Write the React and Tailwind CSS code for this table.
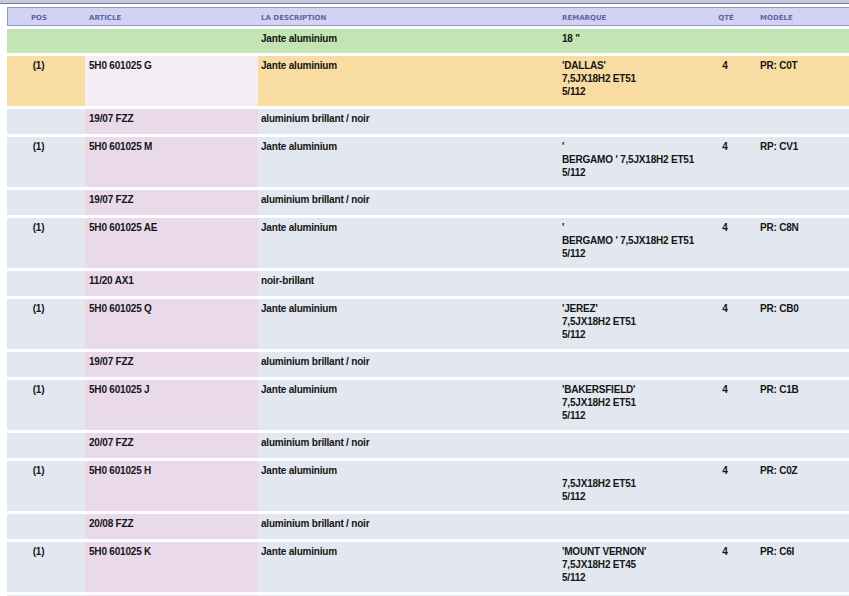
const ROWS = [
  { kind: 'group', desc: 'Jante aluminium', rem: ['18 "'] },
  { kind: 'main', hl: true, pos: '(1)', art: '5H0 601025 G', desc: 'Jante aluminium', rem: ["'DALLAS'", '7,5JX18H2 ET51', '5/112'], qty: '4', mod: 'PR: C0T' },
  { kind: 'sub', art: '19/07 FZZ', desc: 'aluminium brillant / noir' },
  { kind: 'main', pos: '(1)', art: '5H0 601025 M', desc: 'Jante aluminium', rem: ["'", "BERGAMO ' 7,5JX18H2 ET51", '5/112'], qty: '4', mod: 'RP: CV1' },
  { kind: 'sub', art: '19/07 FZZ', desc: 'aluminium brillant / noir' },
  { kind: 'main', pos: '(1)', art: '5H0 601025 AE', desc: 'Jante aluminium', rem: ["'", "BERGAMO ' 7,5JX18H2 ET51", '5/112'], qty: '4', mod: 'PR: C8N' },
  { kind: 'sub', art: '11/20 AX1', desc: 'noir-brillant' },
  { kind: 'main', pos: '(1)', art: '5H0 601025 Q', desc: 'Jante aluminium', rem: ["'JEREZ'", '7,5JX18H2 ET51', '5/112'], qty: '4', mod: 'PR: CB0' },
  { kind: 'sub', art: '19/07 FZZ', desc: 'aluminium brillant / noir' },
  { kind: 'main', pos: '(1)', art: '5H0 601025 J', desc: 'Jante aluminium', rem: ["'BAKERSFIELD'", '7,5JX18H2 ET51', '5/112'], qty: '4', mod: 'PR: C1B' },
  { kind: 'sub', art: '20/07 FZZ', desc: 'aluminium brillant / noir' },
  { kind: 'main', pos: '(1)', art: '5H0 601025 H', desc: 'Jante aluminium', rem: ['\u00a0', '7,5JX18H2 ET51', '5/112'], qty: '4', mod: 'PR: C0Z' },
  { kind: 'sub', art: '20/08 FZZ', desc: 'aluminium brillant / noir' },
  { kind: 'main', pos: '(1)', art: '5H0 601025 K', desc: 'Jante aluminium', rem: ["'MOUNT VERNON'", '7,5JX18H2 ET45', '5/112'], qty: '4', mod: 'PR: C6I' },
  // ligne suivante, à peine visible en bas
  { kind: 'sub' },
]

const COLS = 'grid grid-cols-[78px_173px_300px_136px_62px_1fr]'

function Row({ r }) {
  const rowBg = r.kind === 'group' ? 'bg-[#c2e5b3]' : r.hl ? 'bg-[#f8dca2]' : 'bg-[#e3e7f0]'
  const artBg = r.kind === 'group' ? '' : r.hl ? 'bg-[#f3edf5]' : 'bg-[#e9d9e9]'
  const h = r.kind === 'main' ? 'h-[50px]' : r.kind === 'group' ? 'h-[24px]' : 'h-[25px]'
  return (
    <div className={`${COLS} ${rowBg} ${h} shrink-0`}>
      <div className="pt-[3px] pr-[15px] text-center">{r.pos}</div>
      <div className={`pt-[3px] pl-[4px] whitespace-nowrap ${artBg}`}>{r.art}</div>
      <div className="pt-[3px] pl-[3px] whitespace-nowrap">{r.desc}</div>
      <div className="pt-[3px] pl-[4px]">
        {(r.rem || []).map((l, i) => (
          <div key={i} className="whitespace-nowrap">{l}</div>
        ))}
      </div>
      <div className="pt-[3px] text-center">{r.qty}</div>
      <div className="pt-[3px] pl-[4px] whitespace-nowrap">{r.mod}</div>
    </div>
  )
}

export default function App() {
  return (
    <div className="w-[849px] h-[596px] overflow-hidden bg-white font-['Liberation_Sans',Arial,sans-serif] text-[10px] font-bold leading-[13px] tracking-[-0.2px] text-[#151515]">
      {/* bandeau du haut */}
      <div className="h-[4px] bg-[#c6c9dc] border-b border-[#7575a6]" />
      <div className="pl-[7px] pt-[3px] flex flex-col gap-[3px]">
        {/* en-tête */}
        <div className={`${COLS} h-[19px] items-center pt-[3px] bg-[#d2d2f3] border border-r-0 border-[#9494c6] font-['DejaVu_Sans',Verdana,sans-serif] text-[7px] leading-[9px] tracking-normal text-[#6464a6] shrink-0`}>
          <div className="pr-[16px] text-center">POS</div>
          <div className="pl-[3px]">ARTICLE</div>
          <div className="pl-[2px]">LA DESCRIPTION</div>
          <div className="pl-[3px]">REMARQUE</div>
          <div className="text-center">QTÉ</div>
          <div className="pl-[3px]">MODÈLE</div>
        </div>
        {ROWS.map((r, i) => <Row key={i} r={r} />)}
      </div>
    </div>
  )
}
